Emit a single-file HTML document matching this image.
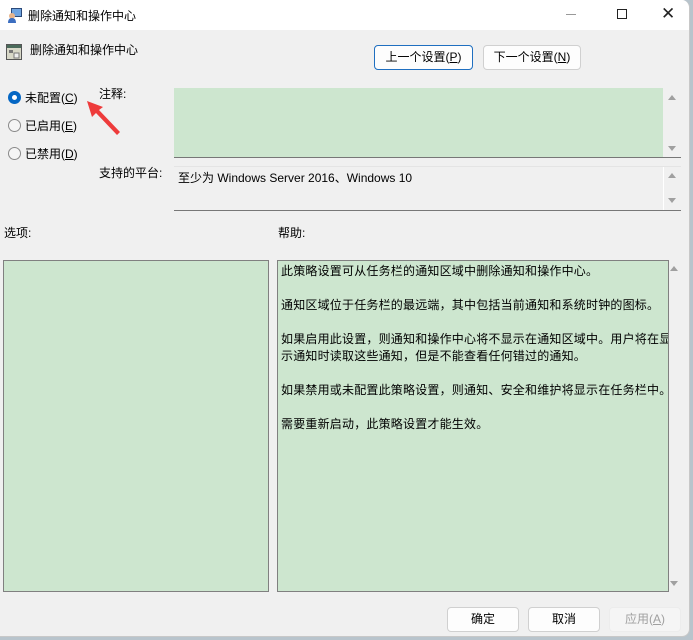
<!DOCTYPE html>
<html><head><meta charset="utf-8"><style>
*{margin:0;padding:0;box-sizing:border-box}
body{width:693px;height:640px;background:#b8c4cc;position:relative;overflow:hidden;font-family:"Liberation Sans","Noto Sans CJK SC","Microsoft YaHei",sans-serif;font-size:12px;color:#000}
.win{position:absolute;left:0;top:0;width:690px;height:637px;background:#f0f0f0;border-right:1px solid #c8c8c8;border-bottom:1px solid #c8c8c8;border-radius:0 8px 8px 0;overflow:hidden}
.title{position:absolute;left:0;top:0;width:690px;height:30px;background:#fff}
.a{position:absolute;white-space:nowrap}
.btn{position:absolute;background:#fdfdfd;border:1px solid #d0d0d0;border-radius:4px;text-align:center;line-height:23px;font-size:12px}
.green{background:#cde6cf}
.radio{position:absolute;left:8px;width:13px;height:13px;border:1px solid #8a8a8a;border-radius:50%;background:#f5f5f5}
.up,.dn{position:absolute;left:5px;width:0;height:0;border-left:4px solid transparent;border-right:4px solid transparent}
.up{border-bottom:5px solid #a0a0a0}
.dn{border-top:5px solid #a0a0a0}
.help p{margin-bottom:17px}
</style></head><body>
<div class="win">
<div class="title"></div>
<svg class="a" style="left:7px;top:7px" width="16" height="16" viewBox="0 0 16 16"><rect x="4" y="1" width="11" height="9" fill="#2b4a7a"/><rect x="5" y="2" width="9" height="7" fill="#6fa4e0"/><circle cx="5" cy="9" r="3" fill="#e8b48a"/><path d="M1 16c0-4 2-5 4-5s4 1 4 5z" fill="#3c6ec0"/></svg>
<div class="a" style="left:28px;top:7px">删除通知和操作中心</div>
<div class="a" style="left:566px;top:14px;width:10px;height:1px;background:#999"></div>
<div class="a" style="left:617px;top:9px;width:10px;height:10px;border:1px solid #222"></div>
<div class="a" style="left:661px;top:4px;font-size:17px;color:#222">✕</div>

<svg class="a" style="left:6px;top:43px" width="16" height="18" viewBox="0 0 16 18"><rect x="0.5" y="1.5" width="15" height="15" fill="#d8d8c8" stroke="#555"/><rect x="1" y="2" width="14" height="3" fill="#4a6a5a"/><rect x="3" y="7" width="4" height="3" fill="#777"/><rect x="8" y="10" width="5" height="5" fill="#eee" stroke="#777"/></svg>
<div class="a" style="left:30px;top:41px">删除通知和操作中心</div>

<div class="btn" style="left:374px;top:45px;width:99px;height:25px;border:1px solid #1f6fc0">上一个设置(<u>P</u>)</div>
<div class="btn" style="left:483px;top:45px;width:98px;height:25px">下一个设置(<u>N</u>)</div>

<div class="radio" style="top:91px;border:4px solid #0567c4;background:#fff"></div>
<div class="a" style="left:25px;top:89px">未配置(<u>C</u>)</div>
<div class="radio" style="top:119px"></div>
<div class="a" style="left:25px;top:117px">已启用(<u>E</u>)</div>
<div class="radio" style="top:147px"></div>
<div class="a" style="left:25px;top:145px">已禁用(<u>D</u>)</div>

<svg class="a" style="left:84px;top:98px" width="40" height="40" viewBox="0 0 40 40"><path d="M3 3 L19 9 L15 12 L36 34 L33 37 L12 15 L8 19 Z" fill="#ee3b3b"/></svg>

<div class="a" style="left:99px;top:85px">注释:</div>
<div class="a" style="left:174px;top:88px;width:507px;height:70px;background:#f0f0f0;border-bottom:1px solid #777"></div>
<div class="a green" style="left:174px;top:88px;width:489px;height:69px"></div>
<div class="up a" style="left:668px;top:95px"></div>
<div class="dn a" style="left:668px;top:146px"></div>

<div class="a" style="left:99px;top:164px">支持的平台:</div>
<div class="a" style="left:174px;top:166px;width:507px;height:45px;border-bottom:1px solid #777;border-top:1px solid #e4e4e4"></div>
<div class="a" style="left:663px;top:167px;width:1px;height:43px;background:#fff"></div>
<div class="a" style="left:178px;top:169px">至少为 Windows Server 2016、Windows 10</div>
<div class="up a" style="left:668px;top:173px"></div>
<div class="dn a" style="left:668px;top:198px"></div>

<div class="a" style="left:4px;top:224px">选项:</div>
<div class="a" style="left:278px;top:224px">帮助:</div>

<div class="a green" style="left:3px;top:260px;width:266px;height:332px;border:1px solid #808080"></div>
<div class="a green help" style="left:277px;top:260px;width:392px;height:332px;border:1px solid #808080;padding:2px 3px;line-height:17px;letter-spacing:0.2px;white-space:nowrap;overflow:hidden">
<p>此策略设置可从任务栏的通知区域中删除通知和操作中心。</p>
<p>通知区域位于任务栏的最远端，其中包括当前通知和系统时钟的图标。</p>
<p>如果启用此设置，则通知和操作中心将不显示在通知区域中。用户将在显<br>示通知时读取这些通知，但是不能查看任何错过的通知。</p>
<p>如果禁用或未配置此策略设置，则通知、安全和维护将显示在任务栏中。</p>
<p>需要重新启动，此策略设置才能生效。</p>
</div>
<div class="up a" style="left:670px;top:266px"></div>
<div class="dn a" style="left:670px;top:581px"></div>

<div class="btn" style="left:447px;top:607px;width:72px;height:25px">确定</div>
<div class="btn" style="left:528px;top:607px;width:72px;height:25px">取消</div>
<div class="btn" style="left:609px;top:607px;width:72px;height:25px;background:#f5f5f5;border-color:#ececec;color:#a0a0a0">应用(<u>A</u>)</div>
</div>
</body></html>
